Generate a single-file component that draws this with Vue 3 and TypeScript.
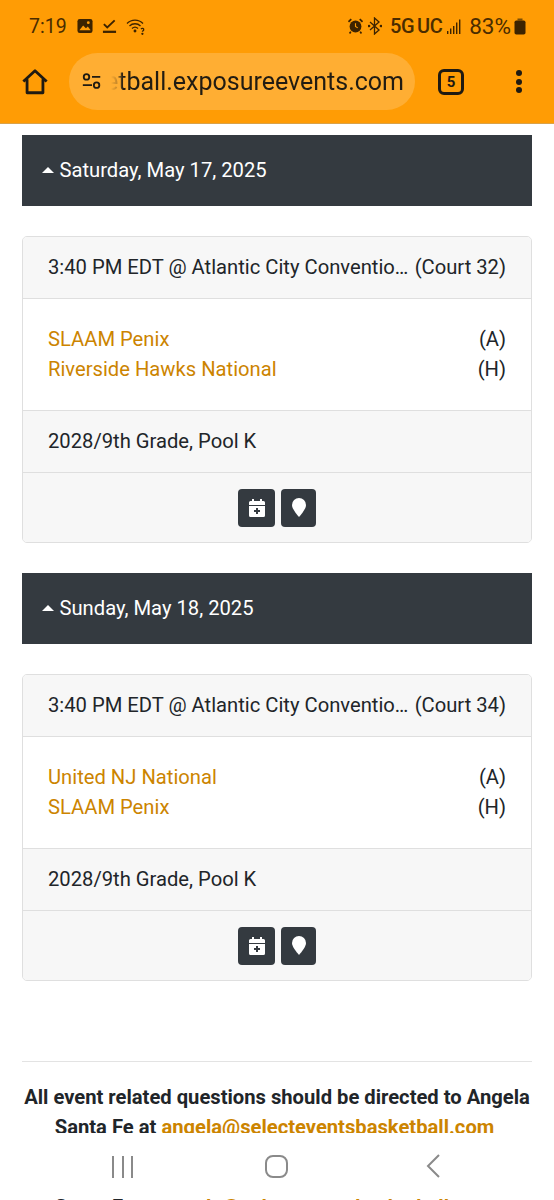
<script setup lang="ts">
interface Game {
  date: string
  court: string
  away: string
  home: string
}
const games: Game[] = [
  { date: 'Saturday, May 17, 2025', court: '(Court 32)', away: 'SLAAM Penix', home: 'Riverside Hawks National' },
  { date: 'Sunday, May 18, 2025', court: '(Court 34)', away: 'United NJ National', home: 'SLAAM Penix' },
]
</script>

<template>
  <div class="screen">
    <header class="chrome">
      <div class="status">
        <div class="status-left">
          <span class="time">7:19</span>
          <svg class="ic" width="16" height="16" viewBox="0 0 17 17"><rect x="0.5" y="1" width="16" height="15" rx="2.5" fill="#3c2300"/><path d="M2.5 13l4-5 3 3 2-2 3 4z" fill="#ff9c05"/><circle cx="12" cy="5" r="1.5" fill="#ff9c05"/></svg>
          <svg class="ic" width="15" height="16" viewBox="0 0 16 17"><path d="M2 6.5l3.6 3.6L13.5 2.5" fill="none" stroke="#3c2300" stroke-width="2"/><rect x="1" y="13.5" width="14" height="2.4" fill="#3c2300"/></svg>
          <svg class="ic" width="20" height="17" viewBox="0 0 20 17" fill="none" stroke="#3c2300" stroke-width="1.3"><path d="M1 5.5C5.5 1 12.5 1 17 5.5"/><path d="M3.5 8C6.5 5 11.500 5 14.500 8"/><path d="M6 10.500c1.800-1.700 4.200-1.700 6 0"/><circle cx="9" cy="13" r="0.8" fill="#3c2300"/><path d="M15 11c1-1.200 3-.6 2.700.8-.2.900-1.200 1-1.300 2"/><circle cx="16.400" cy="15.800" r="0.5" fill="#3c2300"/></svg>
        </div>
        <div class="status-right">
          <svg class="ic" width="15" height="16" viewBox="0 0 16 17"><circle cx="8" cy="9" r="6.300" fill="#3c2300"/><path d="M8 5.500V9l2.400 1.500" fill="none" stroke="#ff9c05" stroke-width="1.200"/><path d="M0.500 4L3.500 1.200M15.500 4L12.500 1.200M3 14.500l-1.300 2M13 14.500l1.300 2" stroke="#3c2300" stroke-width="1.800"/></svg>
          <svg class="ic bt" width="14" height="18" viewBox="0 0 14 18" fill="none" stroke="#3c2300" stroke-width="1.300"><path d="M2 5l9 8-4.500 4V1L11 5l-9 8"/><circle cx="1" cy="9" r="0.700" fill="#3c2300"/><circle cx="13" cy="9" r="0.700" fill="#3c2300"/></svg>
          <span class="net">5G<span class="uc">UC</span></span>
          <svg class="ic sig" width="14" height="15" viewBox="0 0 14 15" fill="#3c2300"><rect x="0" y="12" width="1.400" height="3"/><rect x="3" y="9.500" width="1.400" height="5.500"/><rect x="6" y="7" width="1.400" height="8"/><rect x="9" y="3.500" width="1.400" height="11.500"/><rect x="12" y="0.500" width="1.400" height="14.500"/></svg>
          <span class="batt">83%</span>
          <svg class="ic" width="12" height="17" viewBox="0 0 12 17" fill="#3c2300"><rect x="3.500" y="0.500" width="5" height="2" fill="#7a4d05"/><rect x="0.500" y="2.500" width="11" height="14" rx="1.800"/></svg>
        </div>
      </div>
      <div class="toolbar">
        <svg class="home" width="28" height="28" viewBox="0 0 30 30" fill="none" stroke="#1f1a12" stroke-width="3" stroke-linejoin="round"><path d="M2.500 14.500L15 3l12.500 11.500M6.500 12v14.500h17V12"/></svg>
        <div class="pill">
          <svg class="tune" width="22" height="19" viewBox="0 0 24 20" fill="none" stroke="#1f1a12" stroke-width="2"><circle cx="6" cy="5" r="3"/><path d="M12 5h9M2 14h10"/><circle cx="17" cy="14" r="3"/></svg>
          <div class="url-clip"><span class="url">etball.exposureevents.com</span></div>
        </div>
        <div class="tabs">5</div>
        <div class="menu"><i></i><i></i><i></i></div>
      </div>
    </header>

    <main class="page">
      <section v-for="g in games" :key="g.date" class="day">
        <div class="date-bar"><span class="caret"></span>{{ g.date }}</div>
        <div class="card">
          <div class="row head">
            <span class="venue">3:40 PM EDT @ Atlantic City Conventio…</span>
            <span>{{ g.court }}</span>
          </div>
          <div class="teams">
            <div class="team"><a>{{ g.away }}</a><span>(A)</span></div>
            <div class="team"><a>{{ g.home }}</a><span>(H)</span></div>
          </div>
          <div class="row pool">2028/9th Grade, Pool K</div>
          <div class="actions">
            <button class="btn wide" type="button">
              <svg width="16" height="18" viewBox="0 0 16 18"><path fill="#fff" d="M3 0h2v2h6V0h2v2h1.500A1.500 1.500 0 0 1 16 3.500V6H0V3.500A1.500 1.500 0 0 1 1.500 2H3zM0 7h16v9.500a1.500 1.500 0 0 1-1.500 1.500h-13A1.500 1.500 0 0 1 0 16.500z"/><path d="M8 9v6M5 12h6" stroke="#343a40" stroke-width="2"/></svg>
            </button>
            <button class="btn" type="button">
              <svg width="14" height="19" viewBox="0 0 14 19"><path fill="#fff" d="M7 0a7 7 0 0 1 7 7c0 3.500-4 8.500-7 12C4 15.500 0 10.500 0 7a7 7 0 0 1 7-7z"/></svg>
            </button>
          </div>
        </div>
      </section>
      <hr class="rule" />
      <p class="contact">All event related questions should be directed to Angela Santa Fe at <a>angela@selecteventsbasketball.com</a></p>
    </main>

    <nav class="navbar">
      <div class="recents"><i></i><i></i><i></i></div>
      <div class="square"></div>
      <svg width="16" height="26" viewBox="0 0 16 26" fill="none" stroke="#8a8a8a" stroke-width="2"><path d="M14 2L3 13l11 11"/></svg>
    </nav>
    <div class="ghost"><span>Santa Fe at <a>angela@selecteventsbasketball.com</a></span></div>
  </div>
</template>

<style>
html, body { margin: 0; background: #fff; }
</style>

<style scoped>
.screen {
  position: relative;
  width: 554px;
  height: 1200px;
  overflow: hidden;
  background: #fff;
  font-family: Roboto, "Liberation Sans", sans-serif;
  color: #212529;
}
.chrome { height: 123px; background: #ff9c05; border-bottom: 1px solid #d9a24a; box-sizing: content-box; }
.status { height: 53px; padding: 0 28px 0 29px; display: flex; justify-content: space-between; align-items: flex-start; box-sizing: border-box; color: #4a2c00; }
.status-left, .status-right { display: flex; align-items: center; height: 52px; }
.status-left { gap: 9px; }
.status-right { gap: 5px; }
.time { font-size: 19.5px; margin-right: 1px; }
.net { font-size: 20px; font-weight: 500; letter-spacing: -0.5px; margin-left: 3px; }
.uc { margin-left: 3px; }
.batt { font-size: 22.5px; margin-left: 3px; margin-right: -2px; }
.ic { display: block; flex: none; }
.toolbar { height: 57px; display: flex; align-items: center; position: relative; }
.home { margin-left: 21px; flex: none; }
.pill { margin-left: 20px; width: 346px; height: 57px; border-radius: 29px; background: #ffae33; display: flex; align-items: center; flex: none; }
.tune { margin-left: 12px; flex: none; }
.url-clip { width: 298px; margin-left: 5px; overflow: hidden; -webkit-mask-image: linear-gradient(90deg, transparent 3px, rgba(0,0,0,.25) 9px, #000 15px); mask-image: linear-gradient(90deg, transparent 3px, rgba(0,0,0,.25) 9px, #000 15px); }
.url { font-size: 25px; color: #221c12; white-space: nowrap; display: block; margin-left: -3px; }
.tabs { margin-left: 23px; width: 26px; height: 26px; border: 3px solid #1f1a12; border-radius: 6px; font-size: 15px; font-weight: 700; display: flex; align-items: center; justify-content: center; color: #1f1a12; flex: none; box-sizing: border-box; }
.menu { margin-left: 52px; display: flex; flex-direction: column; gap: 2.500px; flex: none; }
.menu i { width: 6px; height: 6px; border-radius: 50%; background: #1f1a12; display: block; }

.page { padding: 11px 22px 0; }
.day + .day { margin-top: 30px; }
.date-bar { height: 71px; background: #343a40; color: #fff; font-size: 20.200px; display: flex; align-items: center; padding: 0 0 2px 20px; box-sizing: border-box; }
.caret { width: 0; height: 0; border-left: 6px solid transparent; border-right: 6px solid transparent; border-bottom: 6px solid #fff; margin-right: 5.500px; }
.card { margin-top: 30px; border: 1px solid #dfdfdf; border-radius: 5px; overflow: hidden; font-size: 20.200px; background: #fff; }
.row { height: 62px; display: flex; align-items: center; padding: 0 25px 2px 25px; background: #f7f7f7; box-sizing: border-box; }
.head { justify-content: space-between; border-bottom: 1px solid #dfdfdf; white-space: nowrap; }
.teams { height: 111px; padding: 25px 25px 0 25px; box-sizing: border-box; }
.team { display: flex; justify-content: space-between; height: 30px; align-items: center; }
.team a, .contact a, .ghost a { color: #cc8400; }
.pool { border-top: 1px solid #dfdfdf; }
.actions { height: 70px; background: #f7f7f7; border-top: 1px solid #dfdfdf; display: flex; justify-content: center; align-items: center; gap: 6px; box-sizing: border-box; }
.btn { width: 35px; height: 38px; padding: 0; border: 0; border-radius: 4px; background: #343a40; display: flex; align-items: center; justify-content: center; }
.wide { width: 37px; }

.rule { margin: 80px 0 0; border: 0; border-top: 1px solid #e3e3e3; }
.contact { margin: 20px -3px 0; font-size: 20.200px; font-weight: 700; line-height: 30px; text-align: center; color: #212529; }
.contact a { font-weight: 700; margin-right: 5px; }

.navbar { position: absolute; left: 0; right: 0; top: 1133px; height: 62px; background: #fff; }
.recents { position: absolute; left: 112px; top: 23px; display: flex; gap: 7.500px; }
.recents i { display: block; width: 2px; height: 22px; background: #8a8a8a; }
.square { position: absolute; left: 265px; top: 22px; width: 19px; height: 19px; border: 2px solid #8a8a8a; border-radius: 8px; }
.navbar svg { position: absolute; left: 425px; top: 20px; }
.ghost { position: absolute; left: 0; right: 0; top: 1195px; height: 5px; overflow: hidden; text-align: center; font-size: 20.200px; font-weight: 700; line-height: 24px; padding-right: 5px; box-sizing: border-box; }
.ghost span { display: block; }
</style>
